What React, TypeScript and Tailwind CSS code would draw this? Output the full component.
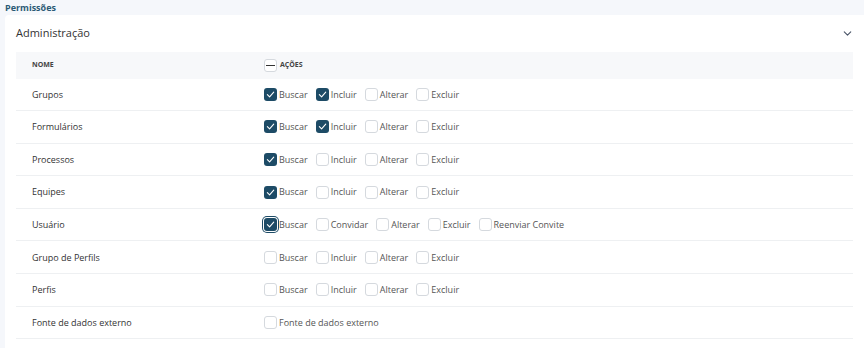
import { ChevronDown } from "lucide-react";

type Perm = { label: string; checked?: boolean; focus?: boolean };
type Row = { name: string; perms: Perm[] };

const rows: Row[] = [
  { name: "Grupos", perms: [{ label: "Buscar", checked: true }, { label: "Incluir", checked: true }, { label: "Alterar" }, { label: "Excluir" }] },
  { name: "Formulários", perms: [{ label: "Buscar", checked: true }, { label: "Incluir", checked: true }, { label: "Alterar" }, { label: "Excluir" }] },
  { name: "Processos", perms: [{ label: "Buscar", checked: true }, { label: "Incluir" }, { label: "Alterar" }, { label: "Excluir" }] },
  { name: "Equipes", perms: [{ label: "Buscar", checked: true }, { label: "Incluir" }, { label: "Alterar" }, { label: "Excluir" }] },
  {
    name: "Usuário",
    perms: [
      { label: "Buscar", checked: true, focus: true },
      { label: "Convidar" },
      { label: "Alterar" },
      { label: "Excluir" },
      { label: "Reenviar Convite" },
    ],
  },
  { name: "Grupo de Perfils", perms: [{ label: "Buscar" }, { label: "Incluir" }, { label: "Alterar" }, { label: "Excluir" }] },
  { name: "Perfis", perms: [{ label: "Buscar" }, { label: "Incluir" }, { label: "Alterar" }, { label: "Excluir" }] },
  { name: "Fonte de dados externo", perms: [{ label: "Fonte de dados externo" }] },
];

const Box = ({ checked, focus, minus }: { checked?: boolean; focus?: boolean; minus?: boolean }) => {
  if (checked) {
    return (
      <span
        className={`flex items-center justify-center w-[13px] h-[13px] rounded-[3px] bg-[#1d4b66] shrink-0 ${
          focus ? "ring-1 ring-[#1d4b66] ring-offset-1" : ""
        }`}
      >
        <svg width="9" height="9" viewBox="0 0 10 10" fill="none">
          <path d="M1.5 5.2 L4 7.6 L8.6 2.4" stroke="white" strokeWidth="1.2" strokeLinecap="round" strokeLinejoin="round" />
        </svg>
      </span>
    );
  }
  return (
    <span className="flex items-center justify-center w-[13px] h-[13px] rounded-[3px] border border-[#d5d9de] bg-white shrink-0">
      {minus && <span className="w-[9px] h-[1.5px] bg-[#333]" />}
    </span>
  );
};

export default function App() {
  return (
    <div className="w-[864px] h-[348px] overflow-hidden bg-[#f5f7fb] font-['Open_Sans',sans-serif]">
      <div className="px-[5px] h-[15px] flex items-center text-[9px] font-bold text-[#2b5a75]">Permissões</div>
      <div className="ml-[5px] bg-white rounded-tl-[4px] h-[400px]">
        <div className="flex items-center justify-between h-[37px] pl-[11px] pr-[10px]">
          <span className="text-[11px] text-[#333]">Administração</span>
          <ChevronDown size={13} strokeWidth={2} className="text-[#4a5568]" />
        </div>
        <div className="ml-[11px] mr-[11px]">
          <div className="flex items-center h-[26.5px] bg-[#f7f8fa] text-[7px] font-bold text-[#444] uppercase">
            <div className="w-[248px] pl-[16px]">Nome</div>
            <div className="flex items-center gap-[3px]">
              <Box minus />
              <span>Ações</span>
            </div>
          </div>
          {rows.map((r) => (
            <div key={r.name} className="flex items-center h-[32.6px] border-b border-[#eef0f2]">
              <div className="w-[248px] pl-[16px] text-[9px] font-medium text-[#333]">{r.name}</div>
              <div className="flex items-center gap-[8px]">
                {r.perms.map((p) => (
                  <label key={p.label} className="flex items-center gap-[2px] text-[9px] text-[#555]">
                    <Box checked={p.checked} focus={p.focus} />
                    <span>{p.label}</span>
                  </label>
                ))}
              </div>
            </div>
          ))}
        </div>
      </div>
    </div>
  );
}
